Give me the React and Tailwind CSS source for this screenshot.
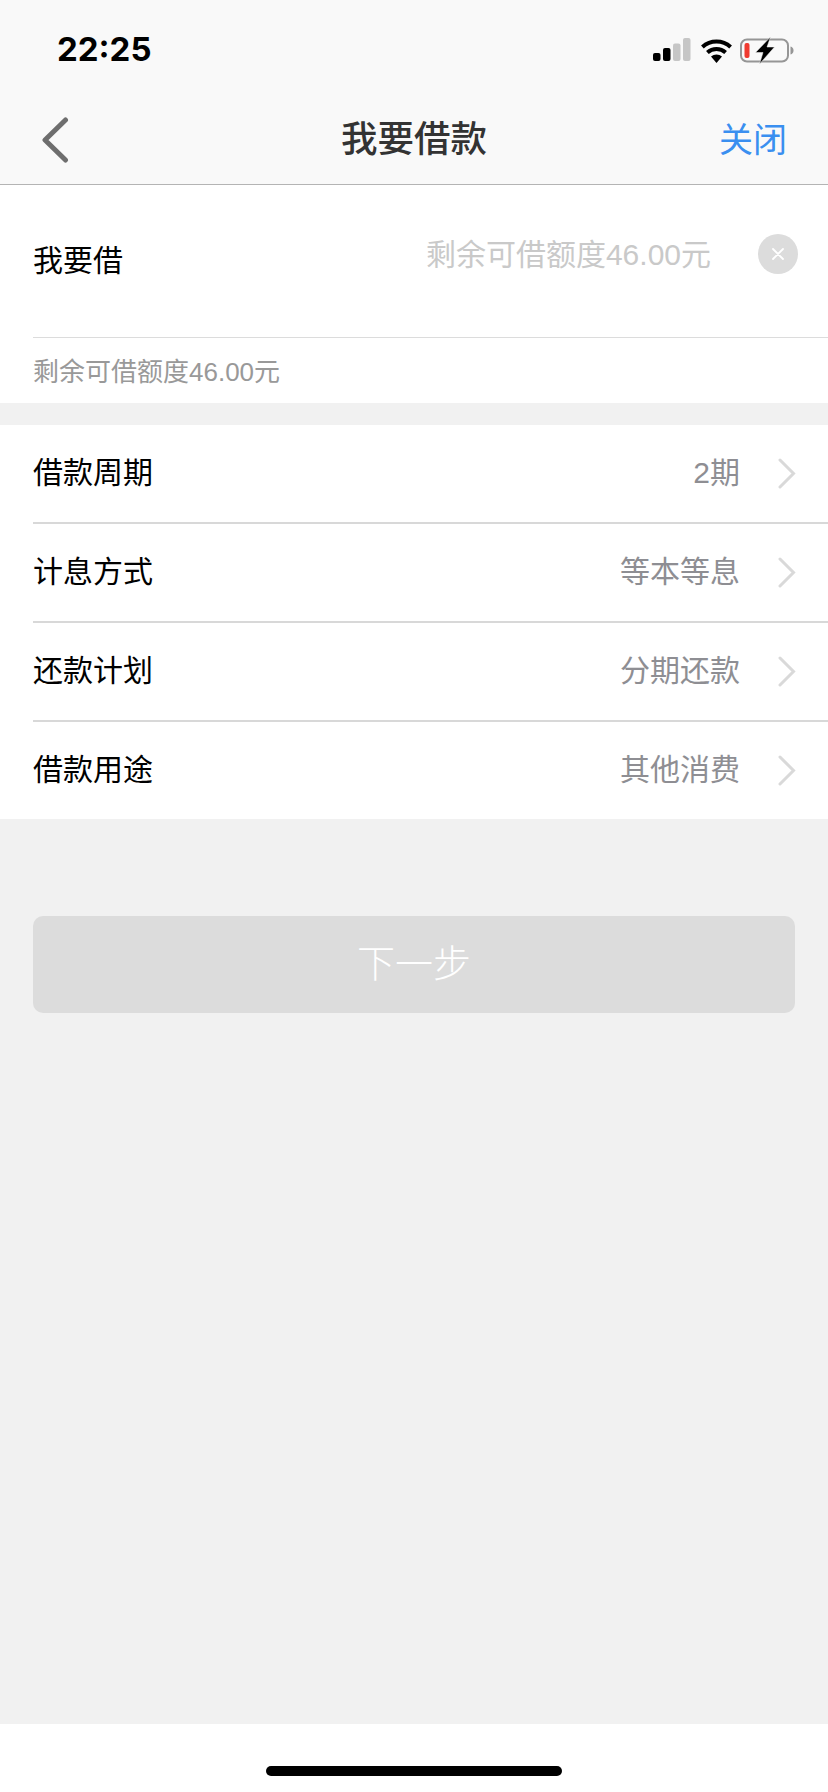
function Signal() {
  return (
    <svg width="38" height="24" viewBox="0 0 38 24" className="block">
      <rect x="0" y="15" width="7.5" height="8" rx="2" fill="#000" />
      <rect x="10" y="10" width="7.5" height="13" rx="2" fill="#000" />
      <rect x="20" y="5.5" width="7.5" height="17.5" rx="2" fill="#c6c6c6" />
      <rect x="30" y="0" width="7.5" height="23" rx="2" fill="#c6c6c6" />
    </svg>
  );
}

function Wifi() {
  return (
    <svg width="33" height="25" viewBox="0 0 33 25" className="block">
      <path d="M16.5 25 L11 18.6 A8.5 8.5 0 0 1 22 18.6 Z" fill="#000" />
      <path d="M7.4 14.6 A13.5 13.5 0 0 1 25.6 14.6" fill="none" stroke="#000" strokeWidth="4" />
      <path d="M2.4 9 A21 21 0 0 1 30.6 9" fill="none" stroke="#000" strokeWidth="4" />
    </svg>
  );
}

function Battery() {
  return (
    <svg width="54" height="27" viewBox="0 0 54 27" className="block">
      <rect x="1" y="2.5" width="47" height="22" rx="6" fill="none" stroke="#969696" strokeWidth="2" />
      <rect x="4.5" y="6" width="5" height="15" rx="2" fill="#f03b30" />
      <path d="M50.5 9.5 C52.5 10 53.5 11.5 53.5 13.5 C53.5 15.5 52.5 17 50.5 17.5 Z" fill="#969696" />
      <path d="M30.5 0 L15.5 15.5 H23 L19.5 27 L34.5 10 H27 Z" fill="#000" stroke="#f9f9f9" strokeWidth="0.5" />
    </svg>
  );
}

function Chevron() {
  return (
    <svg width="18" height="31" viewBox="0 0 18 31" className="block">
      <path d="M2 2 L15.5 15.5 L2 29" fill="none" stroke="#d9d9d9" strokeWidth="3" strokeLinecap="round" strokeLinejoin="miter" />
    </svg>
  );
}

function Row({ label, value, last }) {
  return (
    <div className="pl-[33px]">
      <div className={"flex items-center pr-[32px] " + (last ? "h-[97px]" : "h-[99px] border-b-2 border-[#d8d8d8]")}>
        <span className="flex-1 text-[30px] leading-[40px] text-black pb-[2px]">{label}</span>
        <span className="text-[30px] leading-[40px] text-[#8e8e93] mr-[38px] pb-[2px]">{value}</span>
        <Chevron />
      </div>
    </div>
  );
}

export default function App() {
  return (
    <div
      className="w-[828px] h-[1792px] flex flex-col bg-[#f1f1f1] overflow-hidden"
      style={{ fontFamily: '"Liberation Sans", "Noto Sans CJK SC", sans-serif' }}
    >
      <div className="bg-[#f9f9f9] border-b border-[#b4b4b4] h-[185px] shrink-0">
        <div className="h-[88px] flex items-center pl-[57px] pr-[34px] pt-[10px]">
          <span className="flex-1 text-[33px] leading-[40px] font-bold text-black" style={{ fontFamily: "Inter, sans-serif" }}>22:25</span>
          <div className="flex items-center pt-[2px]">
            <Signal />
            <div className="ml-[9px] mr-[7px]"><Wifi /></div>
            <Battery />
          </div>
        </div>
        <div className="h-[96px] flex items-center pl-[41px] pr-[41px] pt-[8px]">
          <div className="w-[120px]">
            <svg width="28" height="46" viewBox="0 0 28 46" className="block">
              <path d="M24.5 3 L4 23 L24.5 43" fill="none" stroke="#6e6e6e" strokeWidth="5" strokeLinecap="round" strokeLinejoin="round" />
            </svg>
          </div>
          <div className="flex-1 text-center text-[36.5px] leading-[46px] font-medium text-[#333]">我要借款</div>
          <div className="w-[120px] text-right text-[34px] leading-[46px] text-[#3a8ff0]">关闭</div>
        </div>
      </div>

      <div className="bg-white shrink-0 h-[218px] pl-[33px]">
        <div className="h-[153px] border-b border-[#dcdcdc] flex pr-[30px]">
          <span className="flex-1 pt-[56px] text-[30px] leading-[40px] text-black">我要借</span>
          <span className="pt-[50px] text-[30px] leading-[40px] text-[#c9c9c9] mr-[47px]">剩余可借额度46.00元</span>
          <div className="mt-[49px] w-[40px] h-[40px] rounded-full bg-[#dcdcdc] flex items-center justify-center">
            <svg width="14" height="14" viewBox="0 0 14 14">
              <path d="M2 2 L12 12 M12 2 L2 12" stroke="#fff" strokeWidth="1.8" strokeLinecap="round" />
            </svg>
          </div>
        </div>
        <div className="pt-[17px] text-[26px] leading-[34px] text-[#999]">剩余可借额度46.00元</div>
      </div>

      <div className="bg-white shrink-0 mt-[22px]">
        <Row label="借款周期" value="2期" />
        <Row label="计息方式" value="等本等息" />
        <Row label="还款计划" value="分期还款" />
        <Row label="借款用途" value="其他消费" last />
      </div>

      <div className="px-[33px] pt-[97px] flex-1">
        <div className="h-[97px] rounded-[10px] bg-[#dcdcdc] flex items-center justify-center text-[38px] font-light text-white">下一步</div>
      </div>

      <div className="bg-white h-[68px] shrink-0 flex justify-center pt-[42px]">
        <div className="w-[296px] h-[10px] rounded-full bg-black" />
      </div>
    </div>
  );
}
